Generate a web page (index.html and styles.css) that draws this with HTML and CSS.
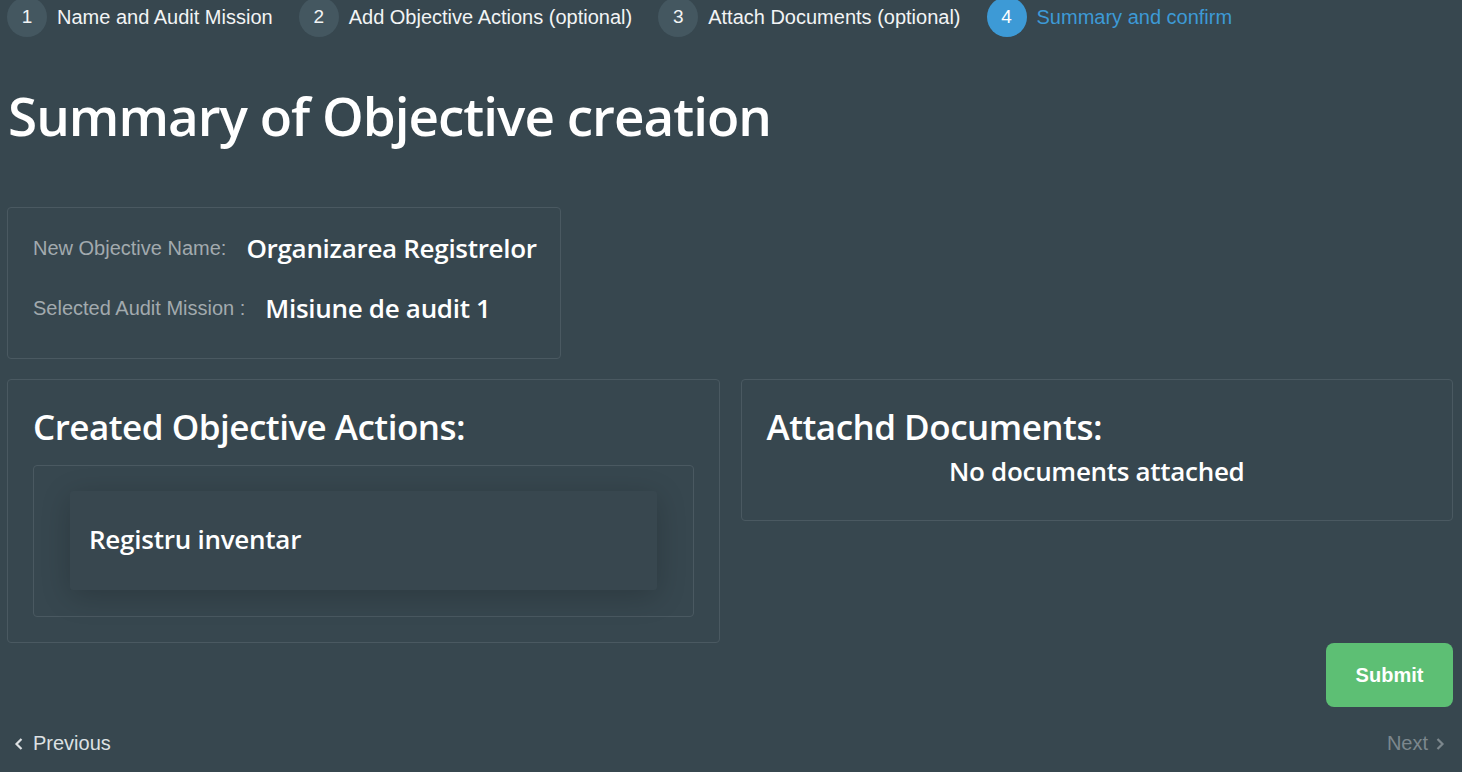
FILE: index.html
```html
<!DOCTYPE html>
<html lang="en">
<head>
<meta charset="utf-8">
<title>Summary of Objective creation</title>
<link rel="stylesheet" href="styles.css">
</head>
<body>
<div class="page">
  <nav class="steps">
    <div class="step"><span class="num">1</span><span class="label">Name and Audit Mission</span></div>
    <div class="step"><span class="num">2</span><span class="label">Add Objective Actions (optional)</span></div>
    <div class="step"><span class="num">3</span><span class="label">Attach Documents (optional)</span></div>
    <div class="step active"><span class="num">4</span><span class="label">Summary and confirm</span></div>
  </nav>

  <h1 class="title">Summary of Objective creation</h1>

  <section class="summary">
    <div class="row"><span class="key">New Objective Name:</span><span class="val">Organizarea Registrelor</span></div>
    <div class="row"><span class="key">Selected Audit Mission :</span><span class="val">Misiune de audit 1</span></div>
  </section>

  <div class="cards">
    <section class="card">
      <h2 class="card-title">Created Objective Actions:</h2>
      <div class="inner">
        <div class="action">Registru inventar</div>
      </div>
    </section>
    <section class="card docs">
      <h2 class="card-title">Attachd Documents:</h2>
      <p class="empty">No documents attached</p>
    </section>
  </div>

  <div class="submit-row">
    <button class="submit">Submit</button>
  </div>

  <div class="pager">
    <a class="prev"><svg width="10" height="14" viewBox="0 0 10 14"><path d="M7.5 2 L2.5 7 L7.5 12" fill="none" stroke="currentColor" stroke-width="2.2"/></svg>Previous</a>
    <a class="next">Next<svg width="10" height="14" viewBox="0 0 10 14"><path d="M2.5 2 L7.5 7 L2.5 12" fill="none" stroke="currentColor" stroke-width="2.2"/></svg></a>
  </div>
</div>
</body>
</html>
```

FILE: styles.css
```css
html, body {
  margin: 0;
  padding: 0;
  background: #37474f;
  height: 100%;
  overflow: hidden;
}
body {
  font-family: "Liberation Sans", Arial, sans-serif;
  color: #ffffff;
}
.page {
  padding: 0 9px 0 7px;
}
.steps {
  display: flex;
  align-items: center;
  gap: 26px;
  margin-top: -3px;
  height: 40px;
}
.step {
  display: flex;
  align-items: center;
  gap: 10px;
}
.num {
  width: 40px;
  height: 40px;
  border-radius: 50%;
  background: #445760;
  display: flex;
  align-items: center;
  justify-content: center;
  font-size: 19px;
  color: #f2f4f5;
}
.label {
  font-size: 20px;
  color: #f2f4f5;
}
.step.active .num {
  background: #3d9ad6;
  color: #fff;
}
.step.active .label {
  color: #3d9ad6;
}
.title {
  font-family: "Open Sans", sans-serif;
  font-weight: 600;
  font-size: 53px;
  letter-spacing: -1px;
  line-height: 60px;
  margin: 49px 0 0 1px;
}
.summary {
  margin-top: 61px;
  width: 554px;
  box-sizing: border-box;
  border: 1px solid #4a5961;
  border-radius: 4px;
  padding: 23px 25px 33px;
  display: flex;
  flex-direction: column;
  gap: 26px;
}
.row {
  display: flex;
  align-items: center;
  height: 34px;
  white-space: nowrap;
}
.key {
  font-size: 20px;
  color: #a2aaae;
  margin-right: 20px;
}
.val, .card-title, .empty, .action {
  font-family: "Open Sans", sans-serif;
  font-weight: 600;
}
.val {
  font-size: 26px;
  letter-spacing: -0.3px;
}
.cards {
  margin-top: 20px;
  display: grid;
  grid-template-columns: 1fr 1fr;
  gap: 21px;
  align-items: start;
}
.card {
  border: 1px solid #4a5961;
  border-radius: 4px;
  padding: 24px 25px 25px;
  box-sizing: border-box;
  height: 264px;
}
.card.docs {
  height: 142px;
}
.card-title {
  font-size: 35px;
  letter-spacing: -0.5px;
  line-height: 46px;
  margin: 0 0 15px;
}
.inner {
  border: 1px solid #4a5961;
  border-radius: 4px;
  padding: 25px 36px 26px;
}
.action {
  background: #38474f;
  box-shadow: 0 6px 30px rgba(0, 0, 0, 0.2);
  border-radius: 3px;
  height: 99px;
  box-sizing: border-box;
  padding: 0 19px 3px;
  display: flex;
  align-items: center;
  font-size: 26px;
  letter-spacing: -0.25px;
}
.empty {
  margin: -12px 0 0;
  text-align: center;
  font-size: 26px;
  letter-spacing: -0.3px;
  line-height: 36px;
}
.submit-row {
  display: flex;
  justify-content: flex-end;
  margin-top: 0;
}
.submit {
  width: 127px;
  height: 64px;
  border: none;
  border-radius: 8px;
  background: #5dbf74;
  color: #fff;
  font-family: "Liberation Sans", Arial, sans-serif;
  font-weight: 700;
  font-size: 20px;
}
.pager {
  display: flex;
  justify-content: space-between;
  align-items: center;
  margin-top: 25px;
  padding: 0 8px 0 7px;
  font-size: 20px;
}
.prev, .next {
  display: flex;
  align-items: center;
  gap: 9px;
}
.prev {
  color: #dde1e3;
}
.next {
  color: #7c878d;
  gap: 7px;
}
```
